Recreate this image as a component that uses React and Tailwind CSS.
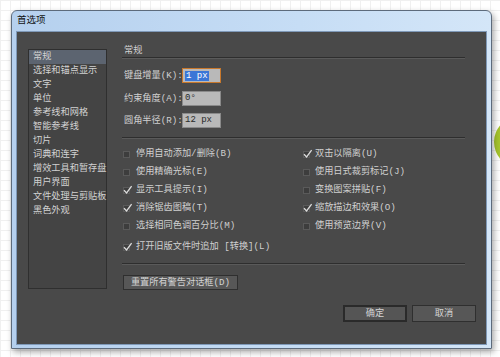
import React from 'react';

const cjk = { fontFamily: '"Liberation Mono", "Noto Sans CJK SC", sans-serif' };

const sidebarItems = [
    '常规',
    '选择和锚点显示',
    '文字',
    '单位',
    '参考线和网格',
    '智能参考线',
    '切片',
    '词典和连字',
    '增效工具和暂存盘',
    '用户界面',
    '文件处理与剪贴板',
    '黑色外观',
];

const leftChecks = [
    { label: '停用自动添加/删除(B)', checked: false },
    { label: '使用精确光标(E)', checked: false },
    { label: '显示工具提示(I)', checked: true },
    { label: '消除锯齿图稿(T)', checked: true },
    { label: '选择相同色调百分比(M)', checked: false },
];

const rightChecks = [
    { label: '双击以隔离(U)', checked: true },
    { label: '使用日式裁剪标记(J)', checked: false },
    { label: '变换图案拼贴(F)', checked: false },
    { label: '缩放描边和效果(O)', checked: true },
    { label: '使用预览边界(V)', checked: false },
];

const CheckRow = ({ label, checked, gap }) => (
    <div className="h-[18px] flex items-center">
        <div className="relative w-[7px] h-[7px] bg-[#3d3d3d] border border-[#5a5a5a] shrink-0">
            {checked && (
                <svg className="absolute left-[-1px] top-[-3px]" width="10" height="10" viewBox="0 0 10 10">
                    <path d="M1 5.2 L3.6 8 L8.6 1.2" fill="none" stroke="#dcdcdc" strokeWidth="1.3" />
                </svg>
            )}
        </div>
        <span className={`${gap} text-[9.2px] text-[#d0d0d0] whitespace-nowrap`}>{label}</span>
    </div>
);

const Field = ({ label, value, active, className }) => (
    <div className={`flex items-center h-[15px] ${className}`}>
        <span className="w-[58px] text-[9.2px] text-[#d0d0d0] whitespace-nowrap">{label}</span>
        <div
            className={`w-[39px] h-[15px] flex items-center pl-[2px] bg-[#b9b9b9] text-[9px] text-[#2a2a2a] ${
                active ? 'border border-[#c8782c]' : 'border border-[#8a8a8a]'
            }`}
        >
            {active ? <span className="bg-[#3a76d6] text-white px-[1px] leading-[10px]">{value}</span> : value}
        </div>
    </div>
);

const App = () => {
    return (
        <div
            className="relative w-[500px] h-[357px] overflow-hidden bg-white bg-[linear-gradient(#f0f0f0_1px,transparent_1px),linear-gradient(90deg,#f0f0f0_1px,transparent_1px)] bg-[size:10px_10px] pt-[10px] pl-[11px]"
            style={cjk}
        >
            <div className="absolute left-[494px] top-[116px] w-[52px] h-[52px] rounded-full bg-[#a6c52c]"></div>

            <div className="relative w-[481px] h-[339px] rounded-t-[6px] border border-[#5d6b7c] bg-[linear-gradient(90deg,#b5d0ee,#c6ddf5_60%,#d4e6f8)] shadow-[2px_3px_6px_rgba(0,0,0,0.35)] flex flex-col">
                <div className="h-[20px] flex items-center pl-[5px] text-[9.5px] text-[#111] shrink-0">首选项</div>

                <div className="mx-[4px] mb-[3px] flex-1 bg-[#494949] border border-[#7f99b8] flex flex-col pt-[17px] pl-[11px]">
                    <div className="flex items-start">
                        <div className="w-[79px] h-[240px] bg-[#444444] border border-[#2f2f2f] flex flex-col">
                            {sidebarItems.map((item, i) => (
                                <div
                                    key={item}
                                    className={`h-[14px] flex items-center pl-[4px] text-[9.2px] text-[#d2d2d2] whitespace-nowrap ${
                                        i === 0 ? 'bg-[#5c6470]' : ''
                                    }`}
                                >
                                    {item}
                                </div>
                            ))}
                        </div>

                        <div className="ml-[15px] w-[343px] -mt-[4px] flex flex-col">
                            <div className="h-[13px] border-b border-[#2e2e2e] shadow-[0_1px_0_#5a5a5a] pl-[2px] text-[9.2px] text-[#d0d0d0] leading-[11px]">
                                常规
                            </div>

                            <div className="pl-[2px]">
                                <Field label="键盘增量(K):" value="1 px" active className="mt-[10px]" />
                                <Field label="约束角度(A):" value="0°" className="mt-[8px]" />
                                <Field label="圆角半径(R):" value="12 px" className="mt-[7px]" />
                            </div>

                            <div className="mt-[9px] h-[1px] bg-[#2e2e2e] shadow-[0_1px_0_#5a5a5a]"></div>

                            <div className="mt-[7px] grid grid-cols-[180px_1fr] pl-[1px]">
                                <div className="flex flex-col">
                                    {leftChecks.map((c) => (
                                        <CheckRow key={c.label} label={c.label} checked={c.checked} gap="ml-[6px]" />
                                    ))}
                                </div>
                                <div className="flex flex-col">
                                    {rightChecks.map((c) => (
                                        <CheckRow key={c.label} label={c.label} checked={c.checked} gap="ml-[5px]" />
                                    ))}
                                </div>
                            </div>

                            <div className="mt-[3px] pl-[1px]">
                                <CheckRow label="打开旧版文件时追加 [转换](L)" checked gap="ml-[6px]" />
                            </div>

                            <div className="mt-[7px] h-[1px] bg-[#2e2e2e] shadow-[0_1px_0_#5a5a5a]"></div>

                            <div className="mt-[11px] pl-[1px]">
                                <button className="w-[115px] h-[15px] bg-[#575757] border border-[#2f2f2f] text-[9.2px] text-[#d4d4d4] flex items-center justify-center">
                                    重置所有警告对话框(D)
                                </button>
                            </div>
                        </div>
                    </div>

                    <div className="mt-[15px] flex justify-end pr-[10px] gap-[5px]">
                        <button className="w-[64px] h-[17px] bg-[#555555] border-2 border-[#2a2a2a] text-[9.2px] text-[#d4d4d4] flex items-center justify-center">
                            确定
                        </button>
                        <button className="w-[64px] h-[17px] bg-[#575757] border border-[#2f2f2f] text-[9.2px] text-[#d4d4d4] flex items-center justify-center">
                            取消
                        </button>
                    </div>
                </div>
            </div>
        </div>
    );
};

export default App;
